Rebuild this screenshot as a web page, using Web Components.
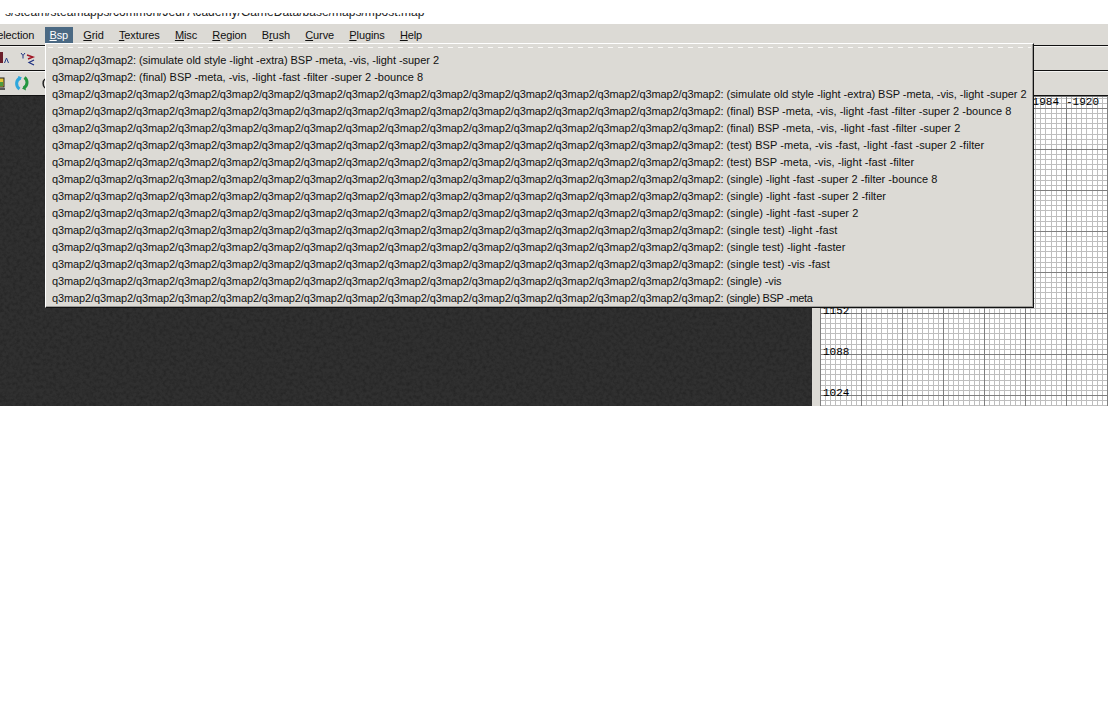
<!DOCTYPE html>
<html>
<head>
<meta charset="utf-8">
<title>Bsp menu</title>
<style>
  html, body { margin: 0; background: #fff; overflow: hidden; }
  body { font: 11px "Liberation Sans", Arial, sans-serif; color: #000; }
</style>
</head>
<body>
<radiant-window>
  <title-strip>s/steam/steamapps/common/Jedi Academy/GameData/base/maps/mpost.map</title-strip>
  <menu-bar>
    <menu-entry><u>S</u>election</menu-entry>
    <menu-entry active><u>B</u>sp</menu-entry>
    <menu-entry><u>G</u>rid</menu-entry>
    <menu-entry><u>T</u>extures</menu-entry>
    <menu-entry><u>M</u>isc</menu-entry>
    <menu-entry><u>R</u>egion</menu-entry>
    <menu-entry>B<u>r</u>ush</menu-entry>
    <menu-entry><u>C</u>urve</menu-entry>
    <menu-entry><u>P</u>lugins</menu-entry>
    <menu-entry><u>H</u>elp</menu-entry>
  </menu-bar>
  <tool-rows></tool-rows>
  <work-area>
    <camera-view></camera-view>
    <grid-view></grid-view>
  </work-area>
  <bsp-menu>
    <bsp-row depth="2" style="letter-spacing:-.035px">(simulate old style -light -extra) BSP -meta, -vis, -light -super 2</bsp-row>
    <bsp-row depth="2" style="letter-spacing:0">(final) BSP -meta, -vis, -light -fast -filter -super 2 -bounce 8</bsp-row>
    <bsp-row depth="16" style="letter-spacing:-.035px">(simulate old style -light -extra) BSP -meta, -vis, -light -super 2</bsp-row>
    <bsp-row depth="16" style="letter-spacing:.01px">(final) BSP -meta, -vis, -light -fast -filter -super 2 -bounce 8</bsp-row>
    <bsp-row depth="16">(final) BSP -meta, -vis, -light -fast -filter -super 2</bsp-row>
    <bsp-row depth="16" style="letter-spacing:.06px">(test) BSP -meta, -vis -fast, -light -fast -super 2 -filter</bsp-row>
    <bsp-row depth="16">(test) BSP -meta, -vis, -light -fast -filter</bsp-row>
    <bsp-row depth="16" style="letter-spacing:.01px">(single) -light -fast -super 2 -filter -bounce 8</bsp-row>
    <bsp-row depth="16">(single) -light -fast -super 2 -filter</bsp-row>
    <bsp-row depth="16">(single) -light -fast -super 2</bsp-row>
    <bsp-row depth="16" style="letter-spacing:.1px">(single test) -light -fast</bsp-row>
    <bsp-row depth="16">(single test) -light -faster</bsp-row>
    <bsp-row depth="16" style="letter-spacing:.07px">(single test) -vis -fast</bsp-row>
    <bsp-row depth="16" style="letter-spacing:-.1px">(single) -vis</bsp-row>
    <bsp-row depth="16" style="letter-spacing:-.32px">(single) BSP -meta</bsp-row>
  </bsp-menu>
</radiant-window>

<script>
(global => {
  'use strict';

  // 共通: open shadow root に html を流し込むだけ
  class Base extends HTMLElement {
    constructor(html) {
      super();
      const shadowRoot = this.attachShadow({ mode: 'open' });
      shadowRoot.innerHTML = html;
    }
  }

  class RadiantWindow extends Base {
    constructor() {
      super(`
  <style>
  :host {
    display: block;
    position: relative;
    height: 406px;
    --panel: #dcdad5;
    --line: #111;
  }
  </style>
  <slot></slot>
  `);
    }
  }

  // the file path above the window, only its lower half shows
  class TitleStrip extends Base {
    constructor() {
      super(`
  <style>
  :host {
    display: block;
    height: 24px;
    overflow: hidden;
    background: #fff;
  }
  .band {
    display: flow-root;
    margin-top: 13px;
    height: 6px;
    overflow: hidden;
  }
  .text {
    margin-top: -9px;
    margin-left: 5px;
    font-size: 12px;
    letter-spacing: 0.03px;
    line-height: 16px;
    white-space: nowrap;
    color: #222;
  }
  </style>
  <div class="band"><div class="text"><slot></slot></div></div>
  `);
    }
  }

  class MenuBar extends Base {
    constructor() {
      super(`
  <style>
  :host {
    display: flex;
    align-items: flex-end;
    gap: 6.2px;
    box-sizing: border-box;
    height: 22px;
    margin-left: -14.6px;
    background: var(--panel);
    border-bottom: 1px solid var(--line);
  }
  </style>
  <slot></slot>
  `);
    }
  }

  class MenuEntry extends Base {
    constructor() {
      super(`
  <style>
  :host {
    display: block;
    padding: 0 4.5px;
    height: 18px;
    line-height: 17px;
    font-size: 11px;
    letter-spacing: -0.1px;
    color: #111;
    white-space: nowrap;
  }
  :host([active]) {
    background: #4b6983;
    color: #fff;
  }
  </style>
  <slot></slot>
  `);
    }
  }

  class ToolRows extends Base {
    constructor() {
      super(`
  <style>
  :host {
    display: block;
    background: var(--panel);
  }
  .row {
    box-sizing: border-box;
    height: 25px;
    border-bottom: 1px solid var(--line);
    box-shadow: inset 0 1px 0 #f4f3f1;
    display: flex;
    align-items: center;
    overflow: hidden;
  }
  svg { display: block; flex: none; }
  </style>
  <div class="row">
    <svg width="40" height="24" viewBox="0 0 40 24">
      <rect x="0" y="6" width="3" height="11" fill="#6b1f2a"/>
      <path d="M4.5 17 L6.5 12 L8.5 17" fill="none" stroke="#23408a" stroke-width="1"/>
      <path d="M21 7 l2 2.5 l2 -2.5 M23 9.5 v3" fill="none" stroke="#1c2f80" stroke-width="1"/>
      <path d="M27 9 L33 11 L28 13" fill="none" stroke="#a01525" stroke-width="1.4"/>
      <path d="M34 14 L29 16.5 L34 19" fill="none" stroke="#1c2f80" stroke-width="1.2"/>
    </svg>
  </div>
  <div class="row">
    <svg width="46" height="24" viewBox="0 0 46 24">
      <rect x="-2" y="7" width="6" height="9" fill="#e6c43a" stroke="#222"/>
      <rect x="0" y="11" width="3" height="4" fill="#4c9a3c"/>
      <path d="M-2 18 H5" stroke="#222" stroke-width="1.4"/>
      <path d="M20.5 7 C15.5 9 15.5 15 19.5 18" fill="none" stroke="#2ea7dc" stroke-width="3"/>
      <path d="M18 5 L22 6.5 L19 9.5 Z" fill="#2ea7dc"/>
      <path d="M23.5 17 C28 15 28 9 24.5 6.5" fill="none" stroke="#23963f" stroke-width="3"/>
      <path d="M26 19.5 L22 17.5 L25 14.5 Z" fill="#23963f"/>
      <path d="M45 8 C42.5 10 42.5 15 45 17" fill="none" stroke="#222" stroke-width="1.5"/>
    </svg>
  </div>
  `);
    }
  }

  class WorkArea extends Base {
    constructor() {
      super(`
  <style>
  :host {
    display: flex;
    height: 310px;
    background: var(--panel);
  }
  </style>
  <slot></slot>
  `);
    }
  }

  class CameraView extends Base {
    constructor() {
      super(`
  <style>
  :host {
    display: block;
    width: 812px;
    flex: none;
    background: #303030;
    overflow: hidden;
  }
  svg { display: block; }
  </style>
  <svg width="812" height="310">
    <filter id="grain" x="0" y="0" width="100%" height="100%">
      <feTurbulence type="fractalNoise" baseFrequency="0.3" numOctaves="3" seed="7"/>
      <feColorMatrix values="0 0 0 0 0  0 0 0 0 0  0 0 0 0 0  1.1 0 0 0 -0.42"/>
    </filter>
    <rect width="812" height="310" filter="url(#grain)" opacity=".4"/>
  </svg>
  `);
    }
  }

  class GridView extends Base {
    constructor() {
      super(`
  <style>
  :host {
    display: block;
    position: relative;
    flex: none;
    box-sizing: border-box;
    width: 288px;
    margin-left: 8px;
    overflow: hidden;
    background: #fff;
    border-top: 1px solid #777;
    font: 11px "Liberation Mono", monospace;
    color: #000;
  }
  svg { display: block; }
  span {
    position: absolute;
    line-height: 10px;
    white-space: pre;
  }
  </style>
  <svg width="288" height="309" shape-rendering="crispEdges">
    <defs>
      <pattern id="cell" width="41" height="41" patternUnits="userSpaceOnUse" patternTransform="translate(0 11)">
        <path d="M5.5 0V41M10.5 0V41M15.5 0V41M20.5 0V41M26.5 0V41M31.5 0V41M36.5 0V41M0 5.5H41M0 10.5H41M0 15.5H41M0 20.5H41M0 26.5H41M0 31.5H41M0 36.5H41" stroke="#bebebe" stroke-width="1" fill="none"/>
        <path d="M.5 0V41M0 .5H41" stroke="#7f7f7f" stroke-width="1" fill="none"/>
      </pattern>
    </defs>
    <rect width="288" height="309" fill="url(#cell)"/>
  </svg>
  <span style="left:206px;top:0">-1984</span>
  <span style="left:246px;top:0">-1920</span>
  <span style="left:3px;top:209px">1152</span>
  <span style="left:3px;top:250px">1088</span>
  <span style="left:3px;top:291px">1024</span>
  `);
    }
  }

  class BspMenu extends Base {
    constructor() {
      super(`
  <style>
  :host {
    display: block;
    position: absolute;
    left: 45px;
    top: 43px;
    box-sizing: border-box;
    width: 989px;
    height: 265px;
    background: var(--panel);
    border-top: 1px solid #fff;
    border-left: 1px solid #fff;
    border-right: 1px solid #111;
    border-bottom: 1px solid #111;
    box-shadow: inset -1px -1px 0 #9d9c99;
  }
  .tearoff {
    height: 1px;
    margin: 3px 2px 4px 2px;
    background: repeating-linear-gradient(90deg, #f7f6f4 0 5px, transparent 5px 10px);
  }
  </style>
  <div class="tearoff"></div>
  <slot></slot>
  `);
    }
  }

  class BspRow extends Base {
    constructor() {
      super(`
  <style>
  :host {
    display: block;
    height: 17px;
    line-height: 17px;
    padding-left: 6px;
    font-size: 11px;
    letter-spacing: 0.03px;
    color: #111;
    white-space: nowrap;
  }
  #path { letter-spacing: -0.12px; }
  </style>
  <span id="path"></span> <slot></slot>
  `);
    }

    connectedCallback() {
      const depth = Number(this.getAttribute('depth'));
      this.shadowRoot.querySelector('#path').textContent =
        new Array(depth).fill('q3map2').join('/') + ':';
    }
  }

  customElements.define('radiant-window', RadiantWindow);
  customElements.define('title-strip', TitleStrip);
  customElements.define('menu-bar', MenuBar);
  customElements.define('menu-entry', MenuEntry);
  customElements.define('tool-rows', ToolRows);
  customElements.define('work-area', WorkArea);
  customElements.define('camera-view', CameraView);
  customElements.define('grid-view', GridView);
  customElements.define('bsp-menu', BspMenu);
  customElements.define('bsp-row', BspRow);
})(this);
</script>
</body>
</html>
